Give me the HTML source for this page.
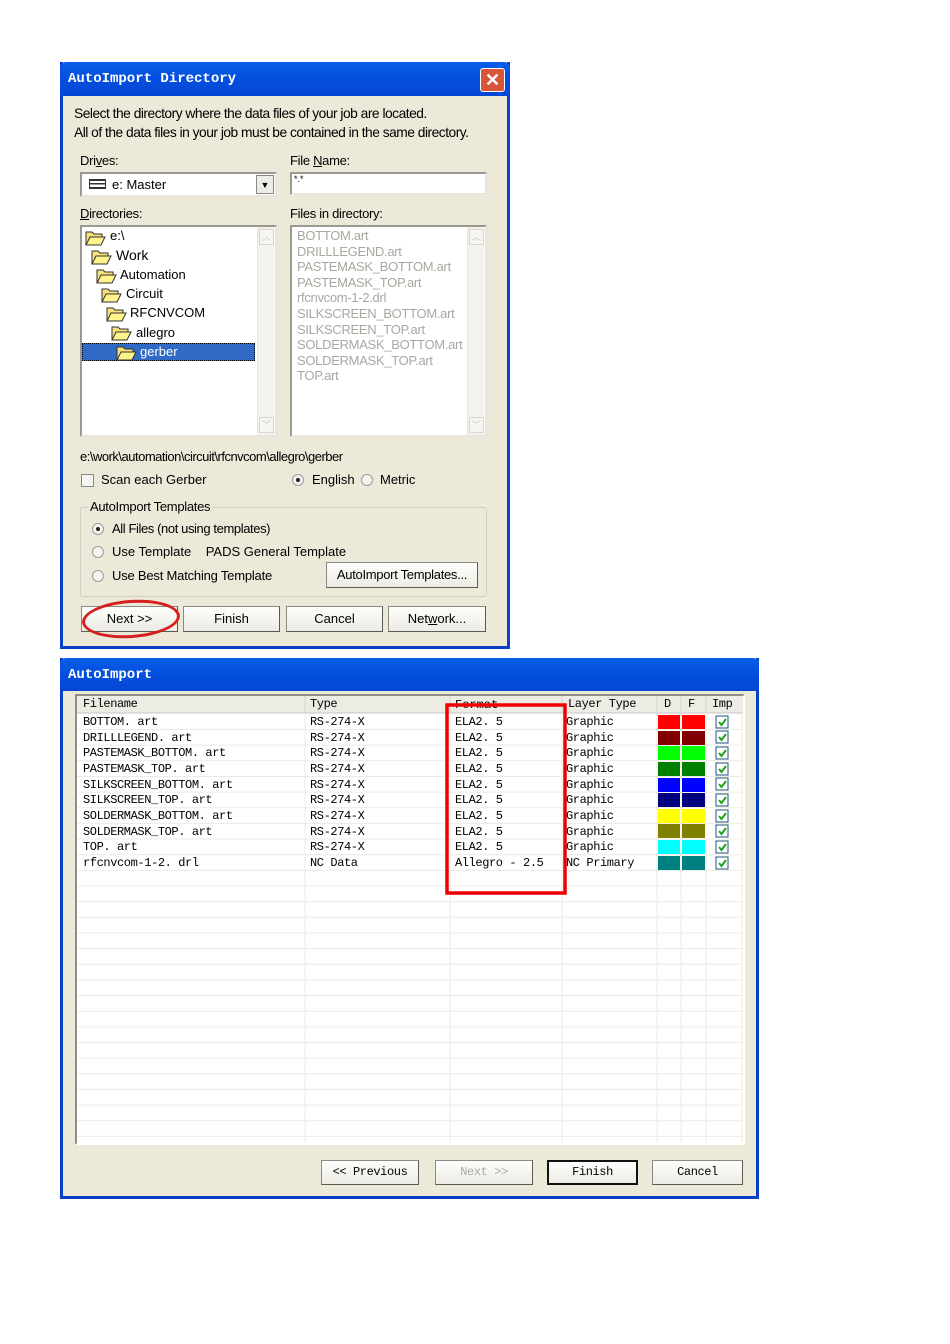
<!DOCTYPE html>
<html><head><meta charset="utf-8"><style>
*{margin:0;padding:0;box-sizing:border-box}
body{width:950px;height:1344px;background:#fff;position:relative;overflow:hidden;font-family:"Liberation Sans",sans-serif;font-size:13px;color:#000}
.a{position:absolute;white-space:nowrap}
.dlg{position:absolute;background:#ece9d8;border:3px solid #0a3fc8;border-top:none}
.tb{position:absolute;left:0;right:0;top:0;background:linear-gradient(#0a5ee8,#0551e0 40%,#0346d4);color:#fff;font-family:"Liberation Mono",monospace;font-weight:bold;font-size:14px}
.btn{position:absolute;background:linear-gradient(#fefefd,#ecebe4);border:1px solid #8a8a80;border-right-color:#5a5a55;border-bottom-color:#5a5a55;text-align:center;font-size:13px}
.inp{position:absolute;background:#fff;border:2px solid #9a9890;border-right-color:#e8e6dc;border-bottom-color:#e8e6dc}
.sb{position:absolute;width:17px;background:#f3f2ec;border-left:1px solid #e5e3da}
.sb i{position:absolute;left:1px;width:15px;height:16px;border:1px solid #d8d6cc;background:#f6f5f0;color:#c8c6bc;font-style:normal;font-size:9px;text-align:center;line-height:14px}
.g{color:#a9a79f}
.rad{position:absolute;width:12px;height:12px;border-radius:50%;border:1px solid #9a9a98;background:#f4f4f0}
.rad.on::after{content:"";position:absolute;left:3px;top:3px;width:4px;height:4px;border-radius:50%;background:#222}
.m{font-family:"Liberation Mono",monospace;font-size:12px;letter-spacing:-0.4px}
</style></head><body>

<!-- Dialog 1 -->
<div class="dlg" style="left:60px;top:62px;width:450px;height:587px">
 <div class="tb" style="height:34px;border-radius:6px 6px 0 0;margin:0 -3px"><span class="a" style="left:8px;top:9px">AutoImport Directory</span>
  <div class="a" style="left:420px;top:6px;width:25px;height:24px;background:#d8543a;border:1px solid #fff;border-radius:3px;color:#fff;font:bold 18px 'Liberation Sans';text-align:center;line-height:22px">✕</div></div>
</div>
<div class="a" style="left:74px;top:106px;font-size:13.8px;letter-spacing:-0.5px">Select the directory where the data files of your job are located.</div>
<div class="a" style="left:74px;top:125px;font-size:13.8px;letter-spacing:-0.5px">All of the data files in your job must be contained in the same directory.</div>
<div class="a" style="left:80px;top:153px;letter-spacing:-0.3px">Dri<u>v</u>es:</div>
<div class="a" style="left:290px;top:153px;letter-spacing:-0.3px">File <u>N</u>ame:</div>
<div class="inp" style="left:80px;top:172px;width:197px;height:25px"></div>
<div class="a" style="left:89px;top:179px;width:17px;height:10px;border:2px solid #333;border-width:2px 1px;background:linear-gradient(#fff 35%,#333 35%,#333 55%,#fff 55%)"></div>
<div class="a" style="left:112px;top:177px">e: Master</div>
<div class="a" style="left:256px;top:175px;width:18px;height:19px;background:#ecebe4;border:1px solid #888;font-size:9px;text-align:center;line-height:18px">▼</div>
<div class="inp" style="left:290px;top:172px;width:197px;height:23px"></div>
<div class="a" style="left:294px;top:174px;font-size:9px">*.*</div>
<div class="a" style="left:80px;top:206px;letter-spacing:-0.3px"><u>D</u>irectories:</div>
<div class="a" style="left:290px;top:206px;letter-spacing:-0.3px">Files in directory:</div>
<div class="inp" style="left:80px;top:225px;width:197px;height:212px"></div>
<div class="sb" style="left:257px;top:227px;height:208px"><i style="top:2px">︿</i><i style="bottom:2px">﹀</i></div>
<div class="a" style="left:82px;top:343px;width:173px;height:18px;background:#316ac5;border:1px dotted #000"></div>
<svg class="a" style="left:0;top:0" width="300" height="370">
 <defs><g id="f"><path d="M0 3h6l2 2h8v3H4l-3 8H0z" fill="#f5e27a" stroke="#333"/><path d="M4 8h15l-4 8H0z" fill="#fff38c" stroke="#333"/></g></defs>
 <use href="#f" x="86" y="229"/><use href="#f" x="92" y="248"/><use href="#f" x="97" y="267"/><use href="#f" x="102" y="286"/><use href="#f" x="107" y="305"/><use href="#f" x="112" y="324"/><use href="#f" x="117" y="344"/>
</svg>
<div class="a" style="left:110px;top:228px">e:\</div>
<div class="a" style="left:116px;top:247px;font-size:14px">Work</div>
<div class="a" style="left:120px;top:267px">Automation</div>
<div class="a" style="left:126px;top:286px">Circuit</div>
<div class="a" style="left:130px;top:305px">RFCNVCOM</div>
<div class="a" style="left:136px;top:325px">allegro</div>
<div class="a" style="left:140px;top:344px;color:#fff">gerber</div>
<div class="inp" style="left:290px;top:225px;width:197px;height:212px"></div>
<div class="sb" style="left:467px;top:227px;height:208px"><i style="top:2px">︿</i><i style="bottom:2px">﹀</i></div>
<div class="a g" style="left:297px;top:228px;line-height:15.6px;font-size:13px;letter-spacing:-0.3px">BOTTOM.art<br>DRILLLEGEND.art<br>PASTEMASK_BOTTOM.art<br>PASTEMASK_TOP.art<br>rfcnvcom-1-2.drl<br>SILKSCREEN_BOTTOM.art<br>SILKSCREEN_TOP.art<br>SOLDERMASK_BOTTOM.art<br>SOLDERMASK_TOP.art<br>TOP.art</div>
<div class="a" style="left:80px;top:449px;letter-spacing:-0.5px">e:\work\automation\circuit\rfcnvcom\allegro\gerber</div>
<div class="a" style="left:81px;top:474px;width:13px;height:13px;border:1px solid #888;background:#f4f4f0"></div>
<div class="a" style="left:101px;top:472px">Scan each Gerber</div>
<div class="rad on" style="left:292px;top:474px"></div><div class="a" style="left:312px;top:472px">English</div>
<div class="rad" style="left:361px;top:474px"></div><div class="a" style="left:380px;top:472px">Metric</div>
<div class="a" style="left:80px;top:507px;width:407px;height:90px;border:1px solid #d0d0bf;border-radius:3px"></div>
<div class="a" style="left:88px;top:499px;background:#ece9d8;padding:0 2px;letter-spacing:-0.3px">AutoImport Templates</div>
<div class="rad on" style="left:92px;top:523px"></div><div class="a" style="left:112px;top:521px;letter-spacing:-0.4px">All Files (not using templates)</div>
<div class="rad" style="left:92px;top:546px"></div><div class="a" style="left:112px;top:544px">Use Template &nbsp;&nbsp; PADS General Template</div>
<div class="rad" style="left:92px;top:570px"></div><div class="a" style="left:112px;top:568px;letter-spacing:-0.2px">Use Best Matching Template</div>
<div class="btn" style="left:326px;top:562px;width:152px;height:26px;line-height:24px;letter-spacing:-0.3px">AutoImport Templates...</div>
<div class="btn" style="left:81px;top:606px;width:97px;height:26px;line-height:24px">Next &gt;&gt;</div>
<div class="btn" style="left:183px;top:606px;width:97px;height:26px;line-height:24px">Finish</div>
<div class="btn" style="left:286px;top:606px;width:97px;height:26px;line-height:24px">Cancel</div>
<div class="btn" style="left:388px;top:606px;width:98px;height:26px;line-height:24px">Net<u>w</u>ork...</div>
<div class="a" style="left:82px;top:600px;width:98px;height:38px;border:3px solid #d62020;border-radius:50%;transform:rotate(-4deg)"></div>

<!-- Dialog 2 -->
<div class="dlg" style="left:60px;top:658px;width:699px;height:541px">
 <div class="tb" style="height:33px;border-radius:6px 6px 0 0;margin:0 -3px"><span class="a" style="left:8px;top:9px">AutoImport</span></div>
</div>
<div class="a" style="left:75px;top:694px;width:670px;height:451px;background:#fff;border:2px solid #8f8d84;border-right-color:#fff;border-bottom-color:#fff"></div>
<svg class="a" style="left:0;top:0" width="760" height="1150">
 <rect x="77" y="696" width="666" height="17" fill="#ecebe4"/>
 <line x1="77" y1="713" x2="743" y2="713" stroke="#c8c6bc"/>
 <g stroke="#d8d6cc">
  <line x1="305" y1="696" x2="305" y2="712"/><line x1="450" y1="696" x2="450" y2="712"/><line x1="562" y1="696" x2="562" y2="712"/><line x1="657" y1="696" x2="657" y2="712"/><line x1="681" y1="696" x2="681" y2="712"/><line x1="706" y1="696" x2="706" y2="712"/>
 </g>
 <g stroke="#ecebe0">
  <line x1="305" y1="714" x2="305" y2="1143"/><line x1="450" y1="714" x2="450" y2="1143"/><line x1="562" y1="714" x2="562" y2="1143"/><line x1="657" y1="714" x2="657" y2="1143"/><line x1="681" y1="714" x2="681" y2="1143"/><line x1="706" y1="714" x2="706" y2="1143"/><line x1="742" y1="714" x2="742" y2="1143"/>
 </g>
 <g id="hl" stroke="#ecebe0"></g>
 <g>
  <rect x="658" y="715" width="22" height="14" fill="#ff0000"/><rect x="682" y="715" width="23" height="14" fill="#ff0000"/>
  <rect x="658" y="731" width="22" height="14" fill="#800000"/><rect x="682" y="731" width="23" height="14" fill="#800000"/>
  <rect x="658" y="746" width="22" height="14" fill="#00ff00"/><rect x="682" y="746" width="23" height="14" fill="#00ff00"/>
  <rect x="658" y="762" width="22" height="14" fill="#008000"/><rect x="682" y="762" width="23" height="14" fill="#008000"/>
  <rect x="658" y="778" width="22" height="14" fill="#0000ff"/><rect x="682" y="778" width="23" height="14" fill="#0000ff"/>
  <rect x="658" y="793" width="22" height="14" fill="#000080"/><rect x="682" y="793" width="23" height="14" fill="#000080"/>
  <rect x="658" y="809" width="22" height="14" fill="#ffff00"/><rect x="682" y="809" width="23" height="14" fill="#ffff00"/>
  <rect x="658" y="824" width="22" height="14" fill="#808000"/><rect x="682" y="824" width="23" height="14" fill="#808000"/>
  <rect x="658" y="840" width="22" height="14" fill="#00ffff"/><rect x="682" y="840" width="23" height="14" fill="#00ffff"/>
  <rect x="658" y="856" width="22" height="14" fill="#008080"/><rect x="682" y="856" width="23" height="14" fill="#008080"/>
 </g>
 <g id="cb"></g>
 <text x="455" y="708" font-family="Liberation Mono" font-size="12">Format</text>
 <rect x="447" y="705" width="118" height="188" fill="none" stroke="#ee0000" stroke-width="3.5"/>
</svg>
<script>
var ns="http://www.w3.org/2000/svg",hl=document.getElementById('hl'),cb=document.getElementById('cb');
for(var i=0;i<28;i++){var y=729.5+i*15.65;var l=document.createElementNS(ns,'line');l.setAttribute('x1',77);l.setAttribute('x2',743);l.setAttribute('y1',y);l.setAttribute('y2',y);hl.appendChild(l);}
var ys=[716,731,747,763,778,794,810,825,841,857];
ys.forEach(function(y){var r=document.createElementNS(ns,'rect');r.setAttribute('x',716);r.setAttribute('y',y);r.setAttribute('width',12);r.setAttribute('height',12);r.setAttribute('fill','#fff');r.setAttribute('stroke','#1c5180');cb.appendChild(r);var p=document.createElementNS(ns,'path');p.setAttribute('d','M719 '+(y+6)+'l2.5 3 4.5-6');p.setAttribute('stroke','#21a121');p.setAttribute('stroke-width','2');p.setAttribute('fill','none');cb.appendChild(p);});
</script>
<div class="a m" style="left:83px;top:697px">Filename</div>
<div class="a m" style="left:310px;top:697px">Type</div>
<div class="a m" style="left:568px;top:697px">Layer Type</div>
<div class="a m" style="left:664px;top:697px">D</div>
<div class="a m" style="left:688px;top:697px">F</div>
<div class="a m" style="left:712px;top:697px">Imp</div>
<div class="a m" style="left:83px;top:715px;line-height:15.65px">BOTTOM. art<br>DRILLLEGEND. art<br>PASTEMASK_BOTTOM. art<br>PASTEMASK_TOP. art<br>SILKSCREEN_BOTTOM. art<br>SILKSCREEN_TOP. art<br>SOLDERMASK_BOTTOM. art<br>SOLDERMASK_TOP. art<br>TOP. art<br>rfcnvcom-1-2. drl</div>
<div class="a m" style="left:310px;top:715px;line-height:15.65px">RS-274-X<br>RS-274-X<br>RS-274-X<br>RS-274-X<br>RS-274-X<br>RS-274-X<br>RS-274-X<br>RS-274-X<br>RS-274-X<br>NC Data</div>
<div class="a m" style="left:455px;top:715px;line-height:15.65px">ELA2. 5<br>ELA2. 5<br>ELA2. 5<br>ELA2. 5<br>ELA2. 5<br>ELA2. 5<br>ELA2. 5<br>ELA2. 5<br>ELA2. 5<br>Allegro - 2.5</div>
<div class="a m" style="left:566px;top:715px;line-height:15.65px">Graphic<br>Graphic<br>Graphic<br>Graphic<br>Graphic<br>Graphic<br>Graphic<br>Graphic<br>Graphic<br>NC Primary</div>
<div class="btn m" style="left:321px;top:1160px;width:98px;height:25px;line-height:23px;font-size:12px">&lt;&lt; Previous</div>
<div class="btn m" style="left:435px;top:1160px;width:98px;height:25px;line-height:23px;font-size:12px;color:#aaa8a0">Next &gt;&gt;</div>
<div class="btn m" style="left:547px;top:1160px;width:91px;height:25px;line-height:21px;font-size:12px;border:2px solid #111">Finish</div>
<div class="btn m" style="left:652px;top:1160px;width:91px;height:25px;line-height:23px;font-size:12px">Cancel</div>
</body></html>
